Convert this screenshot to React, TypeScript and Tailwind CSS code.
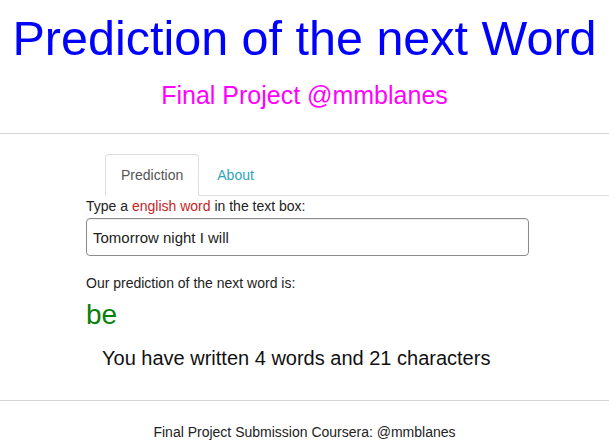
import React from 'react';

// Shiny-style word prediction page
const App = () => {
  const text = 'Tomorrow night I will';
  const words = text.trim().split(/\s+/).length;

  return (
    <div className="min-h-screen bg-white font-['Liberation_Sans',Arial,sans-serif] text-[#333]">
      {/* ── Header ── */}
      <h1 className="pt-[10px] text-center text-[48.5px] leading-[56px] font-normal text-[#0000ff]">
        Prediction of the next Word
      </h1>
      <div className="mt-[14px] text-center text-[25px] leading-[30px] text-[#ff00ff]">
        Final Project @mmblanes
      </div>
      <hr className="mt-[23px] border-0 border-t border-[#d4d4d4]" />

      {/* ── Tabs ── */}
      <ul className="mt-[20px] ml-[105px] flex border-b border-[#dddddd] text-[14px] leading-[20px]">
        <li className="-mb-px rounded-t-[4px] border border-[#dddddd] border-b-white bg-white px-[15px] py-[10px] text-[#555]">
          Prediction
        </li>
        <li className="-mb-px ml-[2px] border border-transparent px-[15px] py-[10px] text-[#2fa4b7]">
          About
        </li>
      </ul>

      {/* ── Prediction panel ── */}
      <div className="ml-[86px] w-[443px]">
        <p className="text-[14px] leading-[20px] text-[#222]">
          Type a <span className="text-[#c81e1e]">english word</span> in the text box:
        </p>
        <input
          className="mt-[2px] h-[38px] w-[443px] rounded-[4px] border border-[#8c8c8c] pl-[6px] text-[15px] text-[#222] shadow-[inset_0_1px_1px_rgba(0,0,0,0.08)] outline-none"
          defaultValue={text}
        />
        <p className="mt-[17px] text-[14px] leading-[20px] text-[#222]">Our prediction of the next word is:</p>
        <div className="mt-[6px] text-[28px] leading-[32px] text-[#0a800a]">be</div>
        <div className="mt-[13px] ml-[16px] w-max text-[20px] leading-[28px] text-[#111]">
          You have written {words} words and {text.length} characters
        </div>
      </div>

      <hr className="mt-[28px] border-0 border-t border-[#d4d4d4]" />

      {/* ── Footer ── */}
      <div className="mt-[21px] text-center text-[14px] leading-[20px] text-[#222]">
        Final Project Submission Coursera: @mmblanes
      </div>
    </div>
  );
};

export default App;
